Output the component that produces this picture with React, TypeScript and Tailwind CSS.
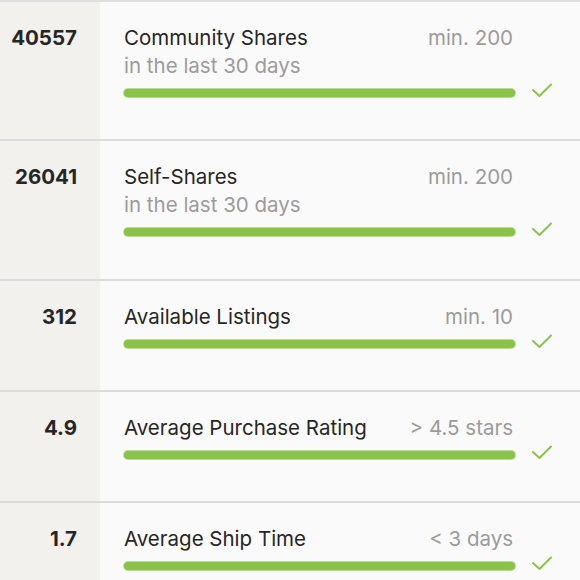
const rows = [
  { value: '40557', title: 'Community Shares', sub: 'in the last 30 days', req: 'min. 200' },
  { value: '26041', title: 'Self-Shares', sub: 'in the last 30 days', req: 'min. 200' },
  { value: '312', title: 'Available Listings', req: 'min. 10' },
  { value: '4.9', title: 'Average Purchase Rating', req: '> 4.5 stars' },
  { value: '1.7', title: 'Average Ship Time', req: '< 3 days' },
]

const Check = () => (
  <svg width="20" height="15" viewBox="0 0 20 15" fill="none" className="shrink-0">
    <polyline points="1,7 7.5,13 19,1.5" stroke="#8bc34a" strokeWidth="2" strokeLinecap="round" strokeLinejoin="round" />
  </svg>
)

const App = () => {
  return (
    <div
      className="w-[580px] h-[580px] overflow-hidden bg-[#fbfafa] border-t-2 border-[#dedede] text-[#262626]"
      style={{ fontFamily: 'Inter, "Noto Sans", sans-serif' }}
    >
      {rows.map((row, i) => (
        <div
          key={row.value}
          className={`flex border-b-2 border-[#dcdcdc] ${i === 0 ? 'h-[139px]' : row.sub ? 'h-[140px]' : 'h-[111px]'}`}
        >
          <div className="w-[100px] shrink-0 bg-[#f2f1ee] pr-[23px] pt-[22px] text-right text-[20.5px] leading-[28px] font-bold">
            {row.value}
          </div>
          <div className="flex-1 pl-6 pr-[28px] pt-[22px]">
            <div className="flex justify-between pr-[39px] text-[20.5px] leading-[28px]">
              <span>{row.title}</span>
              <span className="text-[#9b9b9b]">{row.req}</span>
            </div>
            {row.sub && (
              <div className="text-[20.5px] leading-[28px] text-[#9b9b9b]">{row.sub}</div>
            )}
            <div className="flex items-center gap-[17px] mt-[7px]">
              <div className="flex-1 h-[8px] rounded-full bg-[#8bc34a] shadow-[0_0_0_1px_#b9dc9a]" />
              <div className="-mt-[4px]">
                <Check />
              </div>
            </div>
          </div>
        </div>
      ))}
    </div>
  )
}

export default App
